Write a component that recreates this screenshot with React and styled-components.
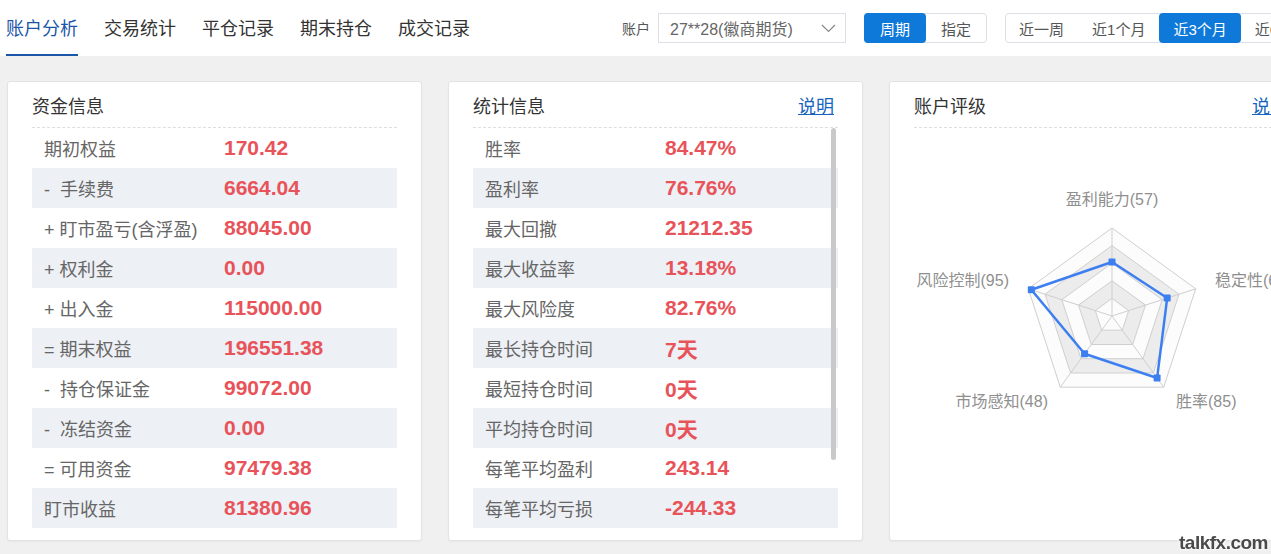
import React from "react";
import styled, { createGlobalStyle } from "styled-components";

const GlobalStyle = createGlobalStyle`
  html, body {
    margin: 0;
    padding: 0;
    overflow: hidden;
    background: #f0f0f0;
  }
  body {
    font-family: "Liberation Sans", "Noto Sans CJK SC", sans-serif;
  }
`;

const Page = styled.div`
  width: 1340px;
  min-height: 554px;
  background: #f0f0f0;
`;

const TopBar = styled.div`
  height: 56px;
  background: #fff;
  display: flex;
  align-items: center;
  padding-left: 6px;
  box-sizing: border-box;
  white-space: nowrap;
  & > * {
    flex-shrink: 0;
  }
`;

const Tabs = styled.nav`
  display: flex;
  gap: 26px;
  height: 100%;
`;

const Tab = styled.div`
  display: flex;
  align-items: center;
  font-size: 18px;
  color: ${(p) => (p.$active ? "#1b55a8" : "#333")};
  border-bottom: 2px solid ${(p) => (p.$active ? "#1b55a8" : "transparent")};
  box-sizing: border-box;
`;

const Filters = styled.div`
  display: flex;
  align-items: center;
  margin-left: 152px;
  & > * {
    flex-shrink: 0;
  }
`;

const FieldLabel = styled.span`
  font-size: 14px;
  color: #555;
  margin-right: 8px;
`;

const Select = styled.div`
  width: 188px;
  height: 30px;
  box-sizing: border-box;
  border: 1px solid #dcdfe6;
  display: flex;
  align-items: center;
  justify-content: space-between;
  padding: 0 9px 0 11px;
  font-size: 16px;
  color: #666;
  background: #fff;
`;

const BtnGroup = styled.div`
  display: flex;
  height: 30px;
  margin-left: 18px;
  border: 1px solid #dcdfe6;
  border-radius: 4px;
  box-sizing: border-box;
`;

const GroupBtn = styled.button`
  flex-shrink: 0;
  white-space: nowrap;
  border: none;
  margin: -1px 0;
  padding: 0 ${(p) => p.$pad || 15}px;
  height: 30px;
  font-family: inherit;
  font-size: 15px;
  color: ${(p) => (p.$active ? "#fff" : "#555")};
  background: ${(p) => (p.$active ? "#0f79d9" : "transparent")};
  border-radius: ${(p) => (p.$active ? "4px" : "0")};
  cursor: pointer;
  &:first-child {
    margin-left: -1px;
  }
`;

const Cards = styled.div`
  display: flex;
  gap: 26px;
  padding: 25px 0 0 7px;
  & > * {
    flex-shrink: 0;
  }
`;

const Card = styled.section`
  width: ${(p) => p.$width || 415}px;
  height: 460px;
  box-sizing: border-box;
  background: #fff;
  border: 1px solid #e3e3e3;
  border-radius: 3px;
  box-shadow: 0 1px 2px rgba(0, 0, 0, 0.04);
  padding: 0 24px 12px;
  display: flex;
  flex-direction: column;
`;

const CardHeader = styled.header`
  flex-shrink: 0;
  height: 45px;
  display: flex;
  align-items: center;
  justify-content: space-between;
  border-bottom: 1px dashed #dedede;
`;

const CardTitle = styled.h3`
  margin: 0;
  font-size: 18px;
  font-weight: normal;
  color: #333;
`;

const HelpLink = styled.a`
  font-size: 18px;
  color: #1565c0;
  text-decoration: underline;
  margin-right: 4px;
  cursor: pointer;
`;

const RowList = styled.div`
  position: relative;
  height: 400px;
  overflow: hidden;
`;

const Row = styled.div`
  display: grid;
  grid-template-columns: 180px 1fr;
  height: 40px;
  align-items: center;
  padding-left: 12px;
  background: ${(p) => (p.$shaded ? "#edf0f5" : "transparent")};
`;

const RowLabel = styled.span`
  font-size: 18px;
  color: #666;
  white-space: pre;
`;

const RowValue = styled.span`
  font-size: 21px;
  font-weight: bold;
  color: #e8535a;
`;

const ScrollThumb = styled.div`
  position: absolute;
  top: 0;
  right: 2px;
  width: 5px;
  height: 332px;
  border-radius: 3px;
  background: #c9c9c9;
`;

const ChartWrap = styled.div`
  flex: 1;
  & > svg {
    display: block;
  }
`;

const AxisLabel = styled.text`
  font-size: 16px;
  fill: #8f8f8f;
  font-family: "Liberation Sans", "Noto Sans CJK SC", sans-serif;
`;

const Watermark = styled.div`
  position: fixed;
  right: 3px;
  bottom: 0;
  font-family: "Liberation Sans", sans-serif;
  font-weight: bold;
  font-size: 19px;
  letter-spacing: -0.5px;
  color: #4a4a4a;
  text-shadow: 0 0 3px #fff, 0 0 3px #fff;
`;

const fundRows = [
  ["期初权益", "170.42"],
  ["-  手续费", "6664.04"],
  ["+ 盯市盈亏(含浮盈)", "88045.00"],
  ["+ 权利金", "0.00"],
  ["+ 出入金", "115000.00"],
  ["= 期末权益", "196551.38"],
  ["-  持仓保证金", "99072.00"],
  ["-  冻结资金", "0.00"],
  ["= 可用资金", "97479.38"],
  ["盯市收益", "81380.96"],
];

const statRows = [
  ["胜率", "84.47%"],
  ["盈利率", "76.76%"],
  ["最大回撤", "21212.35"],
  ["最大收益率", "13.18%"],
  ["最大风险度", "82.76%"],
  ["最长持仓时间", "7天"],
  ["最短持仓时间", "0天"],
  ["平均持仓时间", "0天"],
  ["每笔平均盈利", "243.14"],
  ["每笔平均亏损", "-244.33"],
];

// radar: clockwise from top
const radar = [
  { name: "盈利能力", value: 57 },
  { name: "稳定性", value: 62 },
  { name: "胜率", value: 85 },
  { name: "市场感知", value: 48 },
  { name: "风险控制", value: 95 },
];

const CX = 198;
const CY = 188;
const R = 88;

const pt = (i, r) => {
  const a = ((-90 + i * 72) * Math.PI) / 180;
  return [CX + r * Math.cos(a), CY + r * Math.sin(a)];
};

const ring = (r) =>
  radar.map((_, i) => pt(i, r).map((n) => n.toFixed(1)).join(",")).join(" ");

const scale = (v) => R * (0.087 + 0.00923 * v);

const Radar = () => {
  const levels = [5, 4, 3, 2, 1];
  const data = radar.map((d, i) => pt(i, scale(d.value)));
  return (
    <svg width="380" height="400">
      {levels.map((l) => (
        <polygon
          key={l}
          points={ring((R * l) / 5)}
          fill={l % 2 === 0 ? "#ececec" : "#fcfcfc"}
          stroke="#cfcfcf"
          strokeWidth="1"
        />
      ))}
      {radar.map((_, i) => {
        const [x, y] = pt(i, R);
        return (
          <line key={i} x1={CX} y1={CY} x2={x} y2={y} stroke="#cfcfcf" />
        );
      })}
      <polygon
        points={data.map((p) => p.join(",")).join(" ")}
        fill="none"
        stroke="#3d7ff0"
        strokeWidth="2.5"
        strokeLinejoin="round"
      />
      {data.map(([x, y], i) => (
        <rect
          key={i}
          x={x - 3.5}
          y={y - 3.5}
          width="7"
          height="7"
          rx="1"
          fill="#3d7ff0"
        />
      ))}
      <AxisLabel x={CX} y={73} textAnchor="middle" dominantBaseline="middle">
        盈利能力(57)
      </AxisLabel>
      <AxisLabel x={301} y={154} textAnchor="start" dominantBaseline="middle">
        稳定性(62)
      </AxisLabel>
      <AxisLabel x={262} y={275} textAnchor="start" dominantBaseline="middle">
        胜率(85)
      </AxisLabel>
      <AxisLabel x={134} y={275} textAnchor="end" dominantBaseline="middle">
        市场感知(48)
      </AxisLabel>
      <AxisLabel x={95} y={154} textAnchor="end" dominantBaseline="middle">
        风险控制(95)
      </AxisLabel>
    </svg>
  );
};

const Chevron = () => (
  <svg width="15" height="9" viewBox="0 0 15 9">
    <path d="M1 1l6.5 6.5L14 1" fill="none" stroke="#888" strokeWidth="1.2" />
  </svg>
);

const tabs = ["账户分析", "交易统计", "平仓记录", "期末持仓", "成交记录"];
const periods = ["近一周", "近1个月", "近3个月", "近6个月"];

const App = () => {
  return (
    <Page>
      <GlobalStyle />
      <TopBar>
        <Tabs>
          {tabs.map((t, i) => (
            <Tab key={t} $active={i === 0}>
              {t}
            </Tab>
          ))}
        </Tabs>
        <Filters>
          <FieldLabel>账户</FieldLabel>
          <Select>
            <span>27**28(徽商期货)</span>
            <Chevron />
          </Select>
          <BtnGroup>
            <GroupBtn $active $pad={16}>周期</GroupBtn>
            <GroupBtn>指定</GroupBtn>
          </BtnGroup>
          <BtnGroup>
            {periods.map((p) => (
              <GroupBtn key={p} $pad={14} $active={p === "近3个月"}>
                {p}
              </GroupBtn>
            ))}
          </BtnGroup>
        </Filters>
      </TopBar>

      <Cards>
        <Card>
          <CardHeader>
            <CardTitle>资金信息</CardTitle>
          </CardHeader>
          <RowList>
            {fundRows.map(([label, value], i) => (
              <Row key={label} $shaded={i % 2 === 1}>
                <RowLabel>{label}</RowLabel>
                <RowValue>{value}</RowValue>
              </Row>
            ))}
          </RowList>
        </Card>

        <Card>
          <CardHeader>
            <CardTitle>统计信息</CardTitle>
            <HelpLink>说明</HelpLink>
          </CardHeader>
          <RowList>
            {statRows.map(([label, value], i) => (
              <Row key={label} $shaded={i % 2 === 1}>
                <RowLabel>{label}</RowLabel>
                <RowValue>{value}</RowValue>
              </Row>
            ))}
            <ScrollThumb />
          </RowList>
        </Card>

        <Card $width={428}>
          <CardHeader>
            <CardTitle>账户评级</CardTitle>
            <HelpLink>说明</HelpLink>
          </CardHeader>
          <ChartWrap>
            <Radar />
          </ChartWrap>
        </Card>
      </Cards>
      <Watermark>talkfx.com</Watermark>
    </Page>
  );
};

export default App;
